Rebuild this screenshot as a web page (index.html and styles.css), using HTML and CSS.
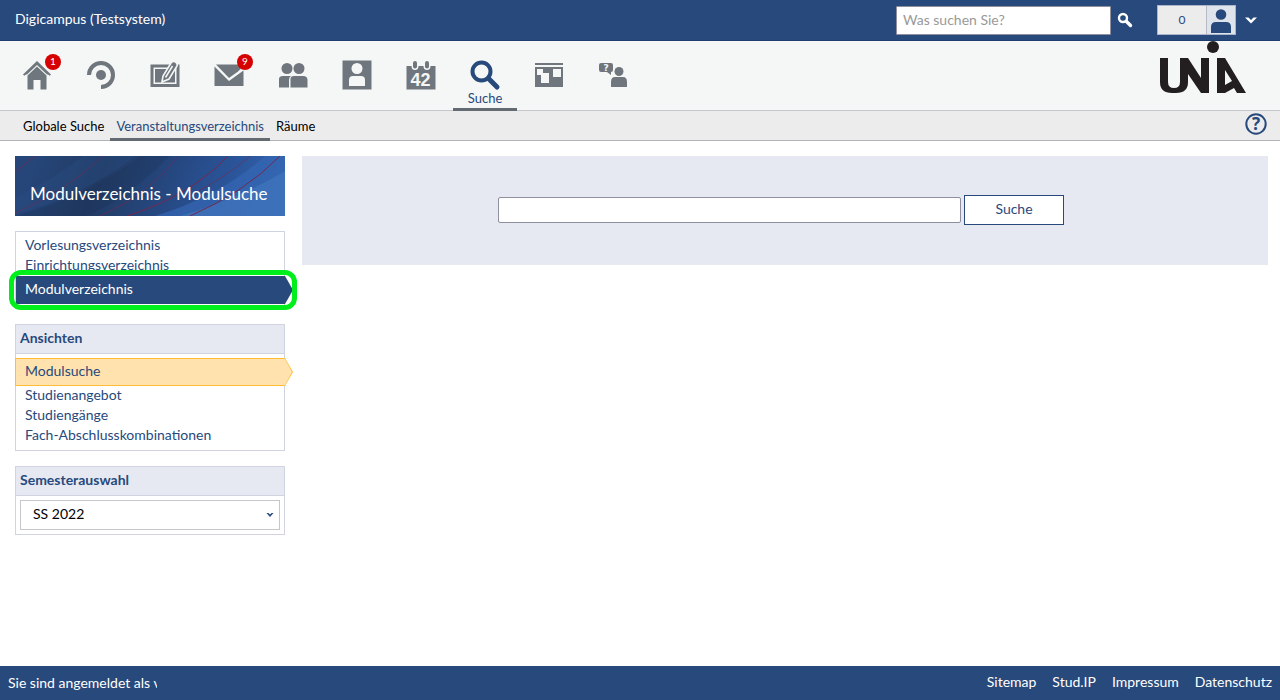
FILE: index.html
```html
<!DOCTYPE html>
<html lang="de">
<head>
    <meta charset="UTF-8">
    <meta name="viewport" content="width=device-width, initial-scale=1.0">
    <title>Modulverzeichnis - Modulsuche</title>
    <link rel="stylesheet" href="styles.css">
</head>
<body>
    <header class="topbar">
        <div class="site-name">Digicampus (Testsystem)</div>
        <form class="quicksearch">
            <input type="text" placeholder="Was suchen Sie?" aria-label="Was suchen Sie?">
            <button type="button" aria-label="Suchen">
                <svg width="16" height="16" viewBox="0 0 16 16"><circle cx="6" cy="6" r="4" fill="none" stroke="#fff" stroke-width="2.400"/><path d="M9.500 9.500l4 4" stroke="#fff" stroke-width="3.400" stroke-linecap="round"/></svg>
            </button>
        </form>
        <div class="account">
            <button type="button" class="notifications">0</button>
            <a href="#" class="avatar" aria-label="Profil">
                <svg width="28" height="28" viewBox="0 0 28 28" fill="#28497c"><circle cx="14" cy="8.500" r="5.300"/><path d="M4 27v-6q0-5 5-5h10q5 0 5 5v6z"/></svg>
            </a>
        </div>
        <button type="button" class="account-menu" aria-label="Menü">
            <svg width="14" height="10" viewBox="0 0 14 10"><path d="M1 2.500h3.500L7 5l2.500-2.500H13L7 8.500z" fill="#fff"/></svg>
        </button>
    </header>

    <nav class="mainnav">
        <ul>
            <li><a href="#" aria-label="Start">
                <svg viewBox="0 0 32 32"><path d="M16 2L2 15.500l1.200 1.200L5 15.500h1L16 6l10 9.500h1l1.800 1.200L30 15.500z"/><path d="M16 7.500L6.500 16.500v14h6V21h7v9.500h6v-14z"/></svg>
                <span class="badge">1</span>
            </a></li>
            <li><a href="#" aria-label="Veranstaltungen">
                <svg viewBox="0 0 32 32"><circle cx="16" cy="16" r="5"/><path d="M4 16A12 12 0 1 1 16 28" fill="none" stroke="#6f767d" stroke-width="4"/></svg>
            </a></li>
            <li><a href="#" aria-label="Notizen">
                <svg viewBox="0 0 32 32"><path fill-rule="evenodd" d="M1.500 5.500h29V28h-29zM4.500 8.500V25h23V8.500z"/><path d="M6 10h20v13.500H6z"/><path d="M13 23l1-6 8-13q2-2.500 4.500-1t1.500 4l-8 13z" fill="#6f767d" stroke="#f5f7f6" stroke-width="1.600"/><path d="M16.500 18.500L23.500 7" stroke="#f5f7f6" stroke-width="1.500"/></svg>
            </a></li>
            <li><a href="#" aria-label="Nachrichten">
                <svg viewBox="0 0 32 32"><path d="M3 5.500h22l3 4-3 3-9 6.500z"/><path d="M1.500 7.500L16 22 30.500 11.500V27h-29z"/></svg>
                <span class="badge">9</span>
            </a></li>
            <li><a href="#" aria-label="Community">
                <svg viewBox="0 0 32 32"><circle cx="10" cy="9.500" r="5.500"/><circle cx="22" cy="9.500" r="5.500"/><path d="M2 28.500V20q0-3 4-3h8q-2 1-2 4v7.500zM13.500 28.500V20q0-3 3.500-3h9q4.500 0 4.500 4v7.500z"/></svg>
            </a></li>
            <li><a href="#" aria-label="Profil">
                <svg viewBox="0 0 32 32"><path d="M1.500 1.500h29v29h-29z"/><circle cx="16" cy="9.500" r="5.500" fill="#f5f7f6"/><path d="M8 27v-6q0-4 4-4h8q4 0 4 4v6z" fill="#f5f7f6"/></svg>
            </a></li>
            <li><a href="#" aria-label="Planer">
                <svg viewBox="0 0 32 32"><path d="M1.500 7h5q0 4 3.500 4t3.500-4h5q0 4 3.500 4t3.500-4h5v23.500h-29z"/><rect x="8" y="2" width="4" height="7.500" rx="2"/><rect x="20" y="2" width="4" height="7.500" rx="2"/><text class="icon-date" x="15.500" y="27" text-anchor="middle">42</text></svg>
            </a></li>
            <li class="active"><a href="#">
                <svg viewBox="0 0 32 32"><circle cx="12.500" cy="12.500" r="9" fill="none" stroke="#28497c" stroke-width="4"/><path d="M19.500 19.500l8.500 8.500" stroke="#28497c" stroke-width="5" stroke-linecap="round"/></svg>
                <span>Suche</span>
            </a></li>
            <li><a href="#" aria-label="Schwarzes Brett">
                <svg viewBox="0 0 32 32"><path d="M2 4h28v2H2zM2 8h28v20H2z"/><path d="M4 10h6v6H4zM8 14h8v10H8zM20 10h8v8h-8z" fill="#f5f7f6"/></svg>
            </a></li>
            <li><a href="#" aria-label="Hilfe-Forum">
                <svg viewBox="0 0 32 32"><path d="M4 4h10q2 0 2 2v5q0 2-2 2v3l-4-3H4q-2 0-2-2V6q0-2 2-2z"/><circle cx="22" cy="12.500" r="4.500"/><path d="M14 28v-5q0-5 4-5h8q4 0 4 5v5z"/><text class="icon-q" x="9" y="12" text-anchor="middle">?</text></svg>
            </a></li>
        </ul>
        <svg class="logo" viewBox="0 0 86 53" fill="#231f20" role="img" aria-label="UNIA">
            <circle cx="53" cy="6" r="6"/>
            <path d="M0 17h8v24q0 6 6 6t6-6V17h8l13 20V17h8v35h-8L28 33v8q0 11-12 11h-4Q0 52 0 41z"/>
            <path fill-rule="evenodd" d="M57 17h8l21 35h-9l-3-5-9 5h-8zM65 29v15l7-4z"/>
        </svg>
    </nav>

    <nav class="subnav">
        <ul>
            <li><a href="#">Globale Suche</a></li>
            <li class="active"><a href="#">Veranstaltungsverzeichnis</a></li>
            <li><a href="#">Räume</a></li>
        </ul>
        <a href="#" class="help" aria-label="Hilfe">
            <svg width="24" height="24" viewBox="0 0 24 24"><circle cx="12" cy="12" r="9.700" fill="none" stroke="#28497c" stroke-width="2"/><text class="help-q" x="12" y="18" text-anchor="middle">?</text></svg>
        </a>
    </nav>

    <div class="page">
        <aside class="sidebar">
            <div class="banner">
                <svg viewBox="0 0 270 60" preserveAspectRatio="none" aria-hidden="true">
                    <defs>
                        <linearGradient id="sky" gradientUnits="userSpaceOnUse" x1="20" y1="0" x2="230" y2="90">
                            <stop offset="0" stop-color="#26467a"/>
                            <stop offset=".3" stop-color="#213a62"/>
                            <stop offset=".55" stop-color="#25467d"/>
                            <stop offset=".8" stop-color="#2a5397"/>
                            <stop offset="1" stop-color="#3161ab"/>
                        </linearGradient>
                    </defs>
                    <path d="M0 0h270v60H0z" fill="url(#sky)"/>
                    <path d="M0 42Q40 22 68 0h52Q70 40 0 58z" fill="#2c548b" opacity=".3"/>
                    <path d="M0 60Q75 40 125 0h30Q110 45 70 60z" fill="#1b3155" opacity=".3"/>
                    <path d="M140 60Q205 40 250 0h20v60z" fill="#3466b3" opacity=".7"/>
                    <path d="M165 60Q225 42 270 15v45z" fill="#467bbf" opacity=".5"/>
                    <g fill="none" stroke="#76294f" stroke-width="1">
                        <path d="M0 16L20 0" opacity=".7"/>
                        <path d="M0 57Q50 36 88 0M85 60Q135 38 163 0M170 42Q210 22 235 0" opacity=".6"/>
                        <path d="M112 60Q175 40 213 0M175 60Q230 36 265 0"/>
                    </g>
                </svg>
                <h1>Modulverzeichnis - Modulsuche</h1>
            </div>

            <div class="widget">
                <ul class="links">
                    <li><a href="#">Vorlesungsverzeichnis</a></li>
                    <li><a href="#">Einrichtungsverzeichnis</a></li>
                    <li class="current marked"><a href="#">Modulverzeichnis</a></li>
                </ul>
            </div>

            <div class="widget">
                <h2>Ansichten</h2>
                <ul class="links">
                    <li class="selected"><a href="#">Modulsuche</a></li>
                    <li><a href="#">Studienangebot</a></li>
                    <li><a href="#">Studiengänge</a></li>
                    <li><a href="#">Fach-Abschlusskombinationen</a></li>
                </ul>
            </div>

            <div class="widget">
                <h2><label for="semester">Semesterauswahl</label></h2>
                <div class="select-wrap">
                    <select id="semester">
                        <option>SS 2022</option>
                    </select>
                    <svg width="8" height="6" viewBox="0 0 8 6"><path d="M.500 1h2L4 2.500 5.500 1h2L4 5z" fill="#28497c"/></svg>
                </div>
            </div>
        </aside>

        <main class="content">
            <form class="modulesearch">
                <input type="text" aria-label="Modulsuche">
                <button type="button">Suche</button>
            </form>
        </main>
    </div>

    <footer class="footer">
        <div class="login-info">Sie sind angemeldet als v</div>
        <ul>
            <li><a href="#">Sitemap</a></li>
            <li><a href="#">Stud.IP</a></li>
            <li><a href="#">Impressum</a></li>
            <li><a href="#">Datenschutz</a></li>
        </ul>
    </footer>
</body>
</html>
```
FILE: styles.css
```css
* {
    box-sizing: border-box;
}
body {
    margin: 0;
    min-height: 100vh;
    display: flex;
    flex-direction: column;
    font-family: Lato, sans-serif;
    font-size: 14px;
    line-height: 20px;
    color: #000;
    background: #fff;
}
ul {
    list-style: none;
    margin: 0;
    padding: 0;
}
a {
    color: #28497c;
    text-decoration: none;
}
svg { display: block; }
input, button, select {
    font: inherit;
    margin: 0;
}
button { cursor: pointer; }

/* top bar */
.topbar {
    display: flex;
    align-items: center;
    height: 41px;
    padding: 0 20px 0 15px;
    background: #28497c;
    border-bottom: 1px solid #1e3e70;
}
.site-name {
    flex: 1;
    color: #fff;
    padding-bottom: 2px;
}
.quicksearch {
    display: flex;
    align-items: center;
}
.quicksearch input {
    width: 215px;
    height: 29px;
    padding: 0 6px 2px;
    border: 1px solid #8f8f9d;
    border-radius: 1px;
    background: #fff;
}
.quicksearch input::placeholder {
    color: #999;
    opacity: 1;
}
.quicksearch button, .account-menu {
    padding: 0;
    border: 0;
    background: none;
}
.quicksearch button { margin-left: 6px; }
.account {
    display: flex;
    height: 30px;
    margin-left: 24px;
    border: 1px solid #a9b6cb;
    background: #ececed;
}
.notifications {
    width: 49px;
    padding: 0;
    border: 0;
    border-right: 1px solid #b4b9c4;
    background: #ececed;
    color: #28497c;
    font-size: 12px;
}
.avatar { background: #dfe3ec; }
.account-menu { margin-left: 8px; margin-right: 2px; }

/* main navigation */
.mainnav {
    display: flex;
    justify-content: space-between;
    height: 70px;
    padding: 0 34px 0 5px;
    background: #f5f7f6;
    border-bottom: 1px solid #c5c7ca;
}
.mainnav ul { display: flex; }
.mainnav li {
    width: 64px;
    height: 70px;
}
.mainnav a {
    position: relative;
    display: flex;
    flex-direction: column;
    align-items: center;
    height: 100%;
    padding-top: 18px;
    font-size: 13px;
    line-height: 15px;
    border-bottom: 3px solid transparent;
}
.mainnav a svg {
    width: 32px;
    height: 32px;
    fill: #6f767d;
}
.mainnav .active a { border-color: #636a71; }
.badge {
    position: absolute;
    top: 13px;
    left: 40px;
    width: 16px;
    height: 16px;
    border-radius: 50%;
    background: #d60000;
    color: #fff;
    font-size: 10px;
    line-height: 14px;
    text-align: center;
}
.icon-date {
    font: bold 18px "Liberation Sans", sans-serif;
    fill: #f5f7f6;
}
.icon-q {
    font: bold 9px "DejaVu Sans", sans-serif;
    fill: #f5f7f6;
}
.logo {
    width: 86px;
    height: 53px;
}

/* second level navigation */
.subnav {
    display: flex;
    justify-content: space-between;
    height: 30px;
    padding: 0 12px 0 17px;
    background: #ececec;
    border-bottom: 1px solid #afb2b8;
    font-size: 13px;
}
.subnav ul { display: flex; }
.subnav li a {
    display: block;
    height: 30px;
    padding: 5px 6px 0;
    color: #000;
    border-bottom: 3px solid transparent;
}
.subnav .active a {
    color: #28497c;
    border-color: #636a71;
}
.help { padding-top: 1px; }
.help-q {
    font: bold 17px "Noto Sans", sans-serif;
    fill: #28497c;
}

/* page */
.page {
    flex: 1;
    display: flex;
    align-items: flex-start;
    gap: 17px;
    padding: 15px 12px 15px 15px;
}
.sidebar {
    display: flex;
    flex-direction: column;
    gap: 15px;
    width: 270px;
}
.banner {
    display: grid;
    height: 60px;
}
.banner svg, .banner h1 { grid-area: 1 / 1; }
.banner svg {
    width: 100%;
    height: 60px;
}
.banner h1 {
    z-index: 1;
    margin: 0;
    padding: 28px 15px 0;
    color: #fff;
    font-size: 17px;
    font-weight: normal;
    line-height: 20px;
    white-space: nowrap;
}
.widget { border: 1px solid #d0d4e0; }
.widget h2 {
    margin: 0;
    padding: 3px 4px 5px;
    background: #e7e9f2;
    border-bottom: 1px solid #d0d4e0;
    color: #28497c;
    font-size: 14px;
    line-height: 20px;
}
.links { padding: 4px 0; }
.links a {
    display: block;
    padding: 0 9px 2px;
    line-height: 18px;
}
.links .current, .links .selected {
    position: relative;
    height: 28px;
}
.links .current { margin-right: -1px; }
.links .selected { margin: 0 -1px; }
.links .current a {
    padding: 4px 9px 6px;
    background: #28497c;
    color: #fff;
}
.links .selected a {
    padding: 3px 9px 5px;
    background: #ffe2ad;
    border: 1px solid #ffbd33;
    border-right: 0;
}
/* arrow tips on the right */
.current a::after, .selected a::before, .selected a::after {
    content: "";
    position: absolute;
    top: 0;
    left: 100%;
    width: 8px;
    height: 28px;
    background: #28497c;
    clip-path: polygon(0 0, 100% 50%, 0 100%);
}
.selected a::before { background: #ffbd33; }
.selected a::after {
    top: 1px;
    height: 26px;
    width: 7px;
    background: #ffe2ad;
}
/* highlight frame */
.marked::before {
    content: "";
    position: absolute;
    inset: -6px -12px -6px -7px;
    border: 5px solid #00ee1c;
    border-radius: 12px;
    z-index: 1;
    pointer-events: none;
}
.select-wrap {
    position: relative;
    padding: 4px;
}
.select-wrap select {
    display: block;
    width: 100%;
    height: 30px;
    padding: 0 12px 2px;
    appearance: none;
    border: 1px solid #c5c7ca;
    border-radius: 0;
    background: #fff;
    color: #000;
}
.select-wrap svg {
    position: absolute;
    top: 16px;
    right: 10px;
    pointer-events: none;
}

/* module search */
.content { flex: 1; }
.modulesearch {
    display: flex;
    align-items: center;
    justify-content: center;
    gap: 3px;
    padding: 39px 8px 40px 0;
    background: #e7e9f2;
}
.modulesearch input {
    width: 50%;
    max-width: 463px;
    height: 26px;
    padding: 0 4px;
    border: 1px solid #8f8f9d;
    border-radius: 2px;
    background: #fff;
}
.modulesearch button {
    width: 100px;
    height: 30px;
    padding: 0 0 2px;
    border: 1px solid #28497c;
    background: #fff;
    color: #28497c;
}

/* footer */
.footer {
    display: flex;
    justify-content: space-between;
    align-items: center;
    height: 34px;
    padding: 0 8px;
    background: #28497c;
    color: #fff;
}
.login-info {
    width: 149px;
    overflow: hidden;
    white-space: nowrap;
}
.footer ul {
    display: flex;
    gap: 16px;
    padding-bottom: 2px;
}
.footer a { color: #fff; }
```
